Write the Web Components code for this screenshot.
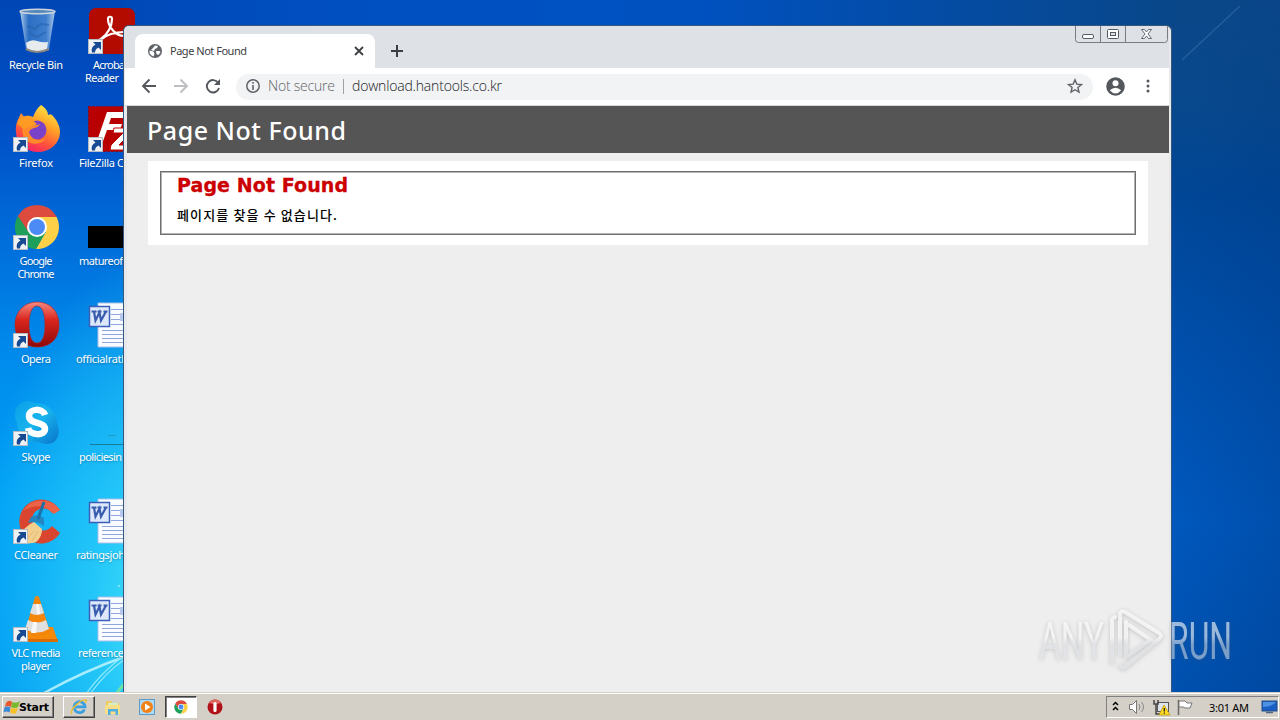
<!DOCTYPE html>
<html lang="en">
<head>
<meta charset="utf-8">
<title>Desktop</title>
<style>
  body {
    margin: 0;
    width: 1280px;
    height: 720px;
    overflow: hidden;
    font-family: "Noto Sans", "Open Sans", sans-serif;
    font-size: 11px;
  }
</style>
</head>
<body>
<x-desktop>
  <x-shortcut icon="bin" label="Recycle Bin" widths="54"></x-shortcut>
  <x-shortcut icon="acrobat" link label="Acroba|Reader" widths="32|34" starts="18|10"></x-shortcut>
  <x-shortcut icon="firefox" link label="Firefox" widths="34"></x-shortcut>
  <x-shortcut icon="filezilla" link label="FileZilla C" widths="45" starts="4"></x-shortcut>
  <x-shortcut icon="chrome" link label="Google|Chrome" widths="33|37"></x-shortcut>
  <x-shortcut icon="black" label="matureof" widths="44" starts="4"></x-shortcut>
  <x-shortcut icon="opera" link label="Opera" widths="30"></x-shortcut>
  <x-shortcut icon="word" label="officialratl" widths="48" starts="1"></x-shortcut>
  <x-shortcut icon="skype" link label="Skype" widths="29"></x-shortcut>
  <x-shortcut icon="line" label="policiesin" widths="43" starts="4"></x-shortcut>
  <x-shortcut icon="ccleaner" link label="CCleaner" widths="44"></x-shortcut>
  <x-shortcut icon="word" label="ratingsjoh" widths="49" starts="1"></x-shortcut>
  <x-shortcut icon="vlc" link label="VLC media|player" widths="49|30"></x-shortcut>
  <x-shortcut icon="word" label="reference" widths="46" starts="3"></x-shortcut>
  <x-browser slot="window" tab="Page Not Found" url="download.hantools.co.kr">
    <x-error-page heading="Page Not Found">페이지를 찾을 수 없습니다.</x-error-page>
  </x-browser>
  <x-watermark slot="window"></x-watermark>
</x-desktop>
<x-taskbar time="3:01 AM"></x-taskbar>

<script>
const CHROME = `
  <path d="M25 15 H44.6 L44.1 14 A22 22 0 0 0 5.9 14 L16 30Z" fill="#dd4b3e"/>
  <path d="M33.7 30 L24 47 A22 22 0 0 0 44.6 15 H25Z" fill="#fdd047"/>
  <path d="M16.3 30 L5.9 14 A22 22 0 0 0 24 47 L33.7 30Z" fill="#1fa05a"/>
  <circle cx="25" cy="25" r="10" fill="#fff"/><circle cx="25" cy="25" r="8" fill="#4c8bf5"/>`;

const ICONS = {
  bin: `
    <defs><linearGradient id="g"><stop offset="0" stop-color="#c4daf0" stop-opacity=".95"/><stop offset=".25" stop-color="#3d7ec8" stop-opacity=".7"/><stop offset=".75" stop-color="#5c97d8" stop-opacity=".7"/><stop offset="1" stop-color="#c5daf0" stop-opacity=".9"/></linearGradient></defs>
    <path d="M8 5 H43 L37 43 Q26 49 14 43 Z" fill="url(#g)"/>
    <path d="M14 37 Q19 33 25 35 T36 36 L35 43 Q25 48 15 43Z" fill="#e8ebee"/>
    <path d="M15 20l8 3 5-5 9 1M17 27l8 4 9-5" stroke="#2862ac" stroke-width="2" fill="none" opacity=".6"/>
    <ellipse cx="25.500" cy="5.500" rx="17.500" ry="2.200" fill="#5388bd" stroke="#ccd3da" stroke-width="1.500"/>
    <path d="M14 43 Q25 49 37 43" stroke="#8c8880" stroke-width="2" fill="none"/>`,
  acrobat: `
    <rect x="2" y="2" width="46" height="46" rx="7" fill="#b30b00"/>
    <path d="M14 33c7-5 11-13 11-20 0-3-4-3-4 0 0 8 8 17 16 17 4 0 4-4 0-4-8 0-16 2-22 7-3 3-5 1-1 0z" fill="none" stroke="#fff" stroke-width="2.200"/>`,
  firefox: `
    <defs><linearGradient id="g" x1=".8" y1="0" x2=".3" y2="1"><stop offset="0" stop-color="#fff04c"/><stop offset=".4" stop-color="#ffa126"/><stop offset=".7" stop-color="#ff553a"/><stop offset="1" stop-color="#f7206b"/></linearGradient></defs>
    <path d="M29 1c5 3 7 7 7 10 3-1 4 0 4 0 5 5 8 11 8 17a22 20 0 0 1-44 0c-1-8 2-12 5-19 1 1 2 3 3 4 2-2 6-1 9 0 2-5 4-9 8-12z" fill="url(#g)"/>
    <circle cx="25" cy="26" r="9.500" fill="#7a42c8"/>
    <path d="M15 22c4 1 8 0 13-2-2 5-9 3-11 8 2 8 10 10 17 6-4 8-20 8-23-3-1-3-1-7 0-10z" fill="#ff8a2a"/>
    <path d="M5 20c2-7 6-9 10-7 4 0 7 5 10 7-4 4-10 2-13 5z" fill="#ff9b25"/>`,
  filezilla: `
    <rect x="1.500" y="2.500" width="46" height="45" fill="#b90000" stroke="#900" stroke-dasharray="2 2"/>
    <path d="M17 8h24l-2 6H21l-2 6h13l-2 6H17l-5 14H6z" fill="#fff" transform="translate(3 0)"/>
    <path d="M27 24h18l-1 5-12 12h12l-2 5H23l1-5 12-12H26z" fill="#fff" stroke="#b90000"/>`,
  chrome: CHROME,
  black: `<rect x="1" y="24" width="46" height="22"/>`,
  opera: `
    <defs><linearGradient id="g" x2="0" y2="1"><stop offset="0" stop-color="#f58a80"/><stop offset=".4" stop-color="#d9251d"/><stop offset="1" stop-color="#8d0909"/></linearGradient></defs>
    <path fill-rule="evenodd" d="M25 2c13 0 22 9 22 23s-9 22-22 22S3 38 3 25 12 2 25 2zM25 6c-5 0-8 7-8 19s3 18 8 18 8-6 8-18S30 6 25 6z" fill="url(#g)" stroke="#bb201c" stroke-width=".6"/>`,
  skype: `
    <defs><linearGradient id="g" x2="1" y2="1"><stop offset="0" stop-color="#0aa0e8"/><stop offset=".5" stop-color="#18b4ee"/><stop offset="1" stop-color="#0873c9"/></linearGradient></defs>
    <path d="M15 3c4 0 7 2 10 2 10 0 20 9 20 20 4 9 1 21-10 21-4 0-7-2-10-2C13 44 5 36 5 25 0 13 5 4 15 3z" fill="url(#g)"/>
    <path d="M33 17c-2-7-16-7-16 1 0 9 16 5 16 13 0 7-15 7-17-1" fill="none" stroke="#fff" stroke-width="6.500"/>`,
  ccleaner: `
    <path d="M48 14A22 22 0 1 0 48 37l-8-7a11 11 0 1 1 0-13z" fill="#d9452f"/>
    <path d="M48 14A22 22 0 0 0 11 15q18-11 31 3z" fill="#ec6347"/>
    <path d="M3 43c7-9 14-15 19-17l8 7c0 6-3 11-6 13-8 3-15 1-21-3z" fill="#f3cf8d"/>
    <path d="M8 42l8-8M14 44l8-9M20 45l6-10" stroke="#e2b878"/>
    <path d="M19 21q6-4 13 1v8q-8-6-16-3z" fill="#2487c2"/>
    <path d="M26 23L32 6" stroke="#1d6fa8" stroke-width="3"/>`,
  vlc: `
    <path d="M14 33h27l5 15H8z" fill="#f58a0a"/><path d="M8 45h38v3H8z" fill="#dc6c05"/>
    <path d="M23 3q2-2 4 0l11 35q-13 8-25 0z" fill="#f5860c"/>
    <path d="M21 10h8l3 9q-7 4-14 0zM16 26q9 5 18 0l3 9q-12 7-24 0z" fill="#e0e0e0"/>
    <path d="M24 10h3l1 10h-3zM21 28h4l-1 11h-5z" fill="#f7f7f7"/>`,
  word: `
    <path d="M11 3h37v44H11z" fill="#f8fbff" stroke="#a9bfe8"/>
    <path d="M24 9.500h20M24 14.500h20M24 19.500h20M24 24.500h20M15 30.500h29M15 34.500h29M15 38.500h29M15 42.500h29" stroke="#91a6dc"/>
    <path d="M33 13h9v8h-9z" fill="#b8c9ee"/>
    <rect x="2.500" y="6.500" width="20" height="20" fill="#dde8fb" stroke="#3a60b9" stroke-width="1.500"/>
    <path d="M7 11.500l1.500 9 4-8 1.500 8 5-9M4.500 11.500h5M10.500 11.500h4M16.500 11.500h4" fill="none" stroke="#3a5cae" stroke-width="2.200"/>`,
  line: `<path d="M3 46.500h45" stroke="#167b99"/><path d="M21 37.500h8" stroke="#2797b8"/>`
};

const ARROW = `<rect x="1.500" y="33.500" width="14" height="14" fill="#eef2f5" stroke="#b5bcc4"/>
  <path d="M6 36h8v8l-2.500-2.500Q8 43 8 46.500H5Q3.500 41 8.500 38.500z" fill="#174a92"/>`;

// small bitmap-like icons of the taskbar
const SMALL = {
  flag: `<svg width="18" height="18" viewBox="0 0 18 18">
    <path d="M3 5q3-4 6-1l-1 5q-3-2-6 0z" fill="#e8562b"/><path d="M9.500 4q4 2 7.500-1l-2 6q-3 2-7 0z" fill="#79b92c"/>
    <path d="M1.500 9.500q3-2 6 0l-1 5q-3-2-6 0z" fill="#3b87d8"/><path d="M8 9.500q4 2 7 0l-2 6q-3 1-6-1z" fill="#f8c12c"/></svg>`,
  ie: `<svg width="18" height="18" viewBox="0 0 18 18">
    <path d="M14.500 11.500A5.500 5.500 0 1 1 15 8.800H5" fill="none" stroke="#3a9fe0" stroke-width="2.800"/>
    <path d="M2 16C-1 12 11 1 16 2c1 1 0 2-1 3" fill="none" stroke="#e9bd35" stroke-width="1.400"/></svg>`,
  folder: `<svg width="18" height="18" viewBox="0 0 18 18">
    <path d="M2 3h5l1 2h7v10H2z" fill="#efc95e"/><path d="M4 5h10v4H4z" fill="#d6efc0"/>
    <path d="M1 7h15v9H1z" fill="#f8df87"/><path d="M4 17v-6h10v6h-2.500v-3.500h-5V17z" fill="#51afe0"/></svg>`,
  player: `<svg width="18" height="18" viewBox="0 0 18 18">
    <rect x="1.500" y="1.500" width="15" height="15" fill="#b2d9f4" stroke="#5a9bcd"/>
    <circle cx="9" cy="9" r="6" fill="#f18215"/><path d="M7 5.500v7l5.500-3.500z" fill="#fff"/></svg>`,
  chrome: `<svg width="14" height="14" viewBox="2 2 46 46">${CHROME}</svg>`,
  opera: `<svg width="18" height="18" viewBox="0 0 18 18">
    <circle cx="9" cy="9" r="7.500" fill="#b01118"/><path d="M3 5a7 7 0 0 1 12 0q-6 2-12 0z" fill="#df6960"/>
    <rect x="7.400" y="4" width="3.200" height="10" rx="1.600" fill="#fff"/></svg>`
};

class XElement extends HTMLElement {
  constructor() {
    super();
    this.attachShadow({mode: 'open'});
  }

  connectedCallback() {
    this.shadowRoot.innerHTML = this.render();
  }

  attr(name) {
    return this.getAttribute(name) || '';
  }
}

// one line of text, tracked so that it takes the given width
class XFit extends XElement {
  render() {
    return `<style>
      :host { display: block; white-space: pre; width: max-content; }
      span { display: inline-block; }
    </style><span><slot></slot></span>`;
  }

  connectedCallback() {
    super.connectedCallback();
    const span = this.shadowRoot.querySelector('span');
    const space = (+this.attr('width') - span.getBoundingClientRect().width) / (this.textContent.length - 1);
    span.style.letterSpacing = space + 'px';
    span.style.marginRight = -space + 'px';
  }
}

class XDesktop extends XElement {
  render() {
    return `<style>
      :host {
        display: block; position: relative; height: 692px; overflow: hidden;
        background: radial-gradient(ellipse 190px 360px at 165px 610px, #4ae4f6 0, rgba(50, 215, 250, .75) 35%, transparent 100%),
          linear-gradient(#0046b5 0, #004fc6 18%, #006cda 34%, #008cec 52%, #00a0f6 72%, #009af2 100%);
      }
      .right { position: absolute; left: 1171px; top: 0; width: 109px; height: 692px;
        background: linear-gradient(100deg, transparent 20%, #00357f66), linear-gradient(#0a4789, #08488c 15%, #004696 28%, #0050ad 50%, #005cc4 75%, #0056b8); }
      .top { position: absolute; left: 123px; top: 0; width: 1049px; height: 27px; background: linear-gradient(90deg, #0049b9, #0050c2 25%, #0051c0 55%, #084789 100%); }
      .streaks { position: absolute; left: 0; top: 0; }
      .icons { position: relative; display: grid; grid-template-columns: 72px 72px; column-gap: 3px; grid-auto-rows: 98px; width: 147px; }
    </style>
    <div class="right"></div>
    <div class="top"></div>
    <svg class="streaks" width="1280" height="692">
      <path d="M44 693Q84 671 124 657" stroke="#bdf4ff" stroke-width="2.500" fill="none" opacity=".85"/>
      <path d="M86 694Q100 674 122 657M90 694Q106 672 124 660" stroke="#8eeaff" stroke-width="1.200" fill="none"/>
      <path d="M116 694l8-10" stroke="#6be3a8" stroke-width="3"/>
      <path d="M1240 6L1182 60" stroke="#3d75ae" stroke-width="1.500" fill="none" opacity=".5"/>
      <path d="M118 586h2" stroke="#c8f6ff"/>
    </svg>
    <div class="icons"><slot></slot></div>
    <slot name="window"></slot>`;
  }
}

class XShortcut extends XElement {
  render() {
    const widths = this.attr('widths').split('|');
    const starts = this.attr('starts').split('|');
    const lines = this.attr('label').split('|').map((text, i) =>
      `<x-fit width="${widths[i]}" style="${starts[i] ? 'align-self:flex-start;margin-left:' + starts[i] + 'px' : ''}">${text}</x-fit>`);
    return `<style>
      :host { display: flex; flex-direction: column; align-items: center; padding-top: 6px; color: #fff;
        font-size: 11px; line-height: 13px; text-shadow: 0 1px 2px #0356; }
      svg { margin-bottom: 4px; flex: none; overflow: visible; }
    </style>
    <svg width="48" height="48" viewBox="0 0 48 48">${ICONS[this.attr('icon')]}${this.hasAttribute('link') ? ARROW : ''}</svg>
    ${lines.join('')}`;
  }
}

class XBrowser extends XElement {
  render() {
    return `<style>
      :host { position: absolute; left: 123px; top: 25px; width: 1049px; height: 667px; box-sizing: border-box;
        display: flex; flex-direction: column; border: 1px solid #35587c; border-bottom: 0; border-radius: 6px 6px 0 0;
        background: #e6e8eb; padding: 0 2px 0 3px; color: #3c4043; }
      .strip { display: flex; height: 42px; background: #dee1e6; margin-left: -3px; padding-left: 2px; border-radius: 5px 5px 0 0; }
      .tab { display: flex; align-items: center; align-self: flex-end; width: 240px; height: 34px; margin-left: 9px;
        box-sizing: border-box; padding: 0 9px 0 12px; background: #fff; border-radius: 8px 8px 0 0; }
      .tab x-fit { margin: -2px auto 0 7px; }
      .tab, .plus, .buttons { flex: none; }
      .plus { align-self: center; margin: 8px auto 0 14px; }
      .bar { display: flex; align-items: center; height: 37px; background: #fff; margin-left: -2px; padding-left: 2px; border-bottom: 1px solid #d5d7da; }
      .nav { margin: -1px 0 0 14px; display: flex; gap: 16px; }
      .omni { display: flex; align-items: center; flex: none; width: 857px; height: 26px; box-sizing: border-box; margin-left: 15px;
        border-radius: 13px; background: #f1f3f4; padding: 0 10px; font: 300 14px "Open Sans", sans-serif; }
      .omni x-fit { margin: -2px 0 0 8px; color: #5f6368; }
      .omni i { width: 1px; height: 15px; background: #9aa0a6; margin-left: 8px; }
      .omni .url { color: #202124; margin: -2px auto 0 8px; }
      .omni svg { margin-top: -1px; }
      .profile { margin: -1px 0 0 13px; }
      .dots { margin: -1px 0 0 20px; }
      ::slotted(*) { flex: 1; }
    </style>
    <div class="strip">
      <div class="tab">
        <svg width="16" height="16" viewBox="0 0 16 16"><circle cx="8" cy="8" r="7" fill="#5f6368"/>
          <path d="M2.500 7.500l4 1 1 2.500-1 2.500Q2 12 2.500 7.500zM8 2.500l3 .5-1 2-2 1-1 2-3-1 2-2zM9 8l3.500 0 1 1-2 3-2-1z" fill="#fff"/></svg>
        <x-fit width="77">${this.attr('tab')}</x-fit>
        <svg width="14" height="14" viewBox="0 0 14 14"><path d="M3 3l8 8M11 3l-8 8" stroke="#3c4043" stroke-width="1.800"/></svg>
      </div>
      <svg class="plus" width="16" height="16" viewBox="0 0 16 16"><path d="M8 2v12M2 8h12" stroke="#3c4043" stroke-width="2"/></svg>
      <svg class="buttons" width="94" height="18" viewBox="0 0 94 18">
        <path d="M.5 0v13.500q0 3 3 3h86q3 0 3-3V0M25.500 0v16.500M50.500 0v16.500" fill="none" stroke="#777d87"/>
        <rect x="7.500" y="8.500" width="11" height="4" rx="1.500" fill="#fff" stroke="#555b66"/>
        <rect x="32.500" y="3.500" width="11" height="9" rx="1" fill="#fff" stroke="#555b66"/>
        <rect x="35.500" y="6.500" width="5" height="3" fill="#dee1e6" stroke="#555b66"/>
        <path d="M66.500 3.500h3l2 2.500 2-2.500h3l-3.500 4.500 3.500 4.500h-3l-2-2.500-2 2.500h-3l3.500-4.500z" fill="#fff" stroke="#555b66" stroke-width=".9"/>
      </svg>
    </div>
    <div class="bar">
      <div class="nav">
        <svg width="16" height="16" viewBox="0 0 16 16"><path d="M15 8H2M8.500 1.500L2 8l6.500 6.500" fill="none" stroke="#54585d" stroke-width="1.900"/></svg>
        <svg width="16" height="16" viewBox="0 0 16 16"><path d="M1 8h13M7.500 1.500L14 8l-6.500 6.500" fill="none" stroke="#bcbec1" stroke-width="1.900"/></svg>
        <svg width="16" height="16" viewBox="0 0 16 16"><path d="M13.200 4.800A6.200 6.200 0 1 0 14 10" fill="none" stroke="#54585d" stroke-width="1.900"/><path d="M15 1v6H9z" fill="#54585d"/></svg>
      </div>
      <div class="omni">
        <svg width="14" height="14" viewBox="0 0 14 14"><circle cx="7" cy="7" r="6.200" fill="none" stroke="#5f6368" stroke-width="1.500"/><path d="M7 6v5M7 3v1.700" stroke="#5f6368" stroke-width="1.600"/></svg>
        <x-fit width="67">Not secure</x-fit><i></i>
        <x-fit class="url" width="150">${this.attr('url')}</x-fit>
        <svg width="16" height="16" viewBox="0 0 16 16"><path d="M8 1.800l1.800 4.300 4.700.4-3.600 3 1.100 4.600L8 11.700 4 14.100l1.100-4.600-3.600-3 4.700-.4z" fill="none" stroke="#5f6368" stroke-width="1.400"/></svg>
      </div>
      <svg class="profile" width="19" height="19" viewBox="0 0 19 19"><circle cx="9.500" cy="9.500" r="9.300" fill="#54585d"/><circle cx="9.500" cy="6.200" r="3" fill="#fff"/><path d="M3.800 13.200q5.700-5 11.400 0-5.700 6.600-11.400 0z" fill="#fff"/></svg>
      <svg class="dots" width="6" height="16" viewBox="0 0 6 16" fill="#54585d"><circle cx="3" cy="3" r="1.500"/><circle cx="3" cy="8" r="1.500"/><circle cx="3" cy="13" r="1.500"/></svg>
    </div>
    <slot></slot>`;
  }
}

class XErrorPage extends XElement {
  render() {
    const heading = this.attr('heading');
    return `<style>
      :host { display: block; background: #eee; color: #000; }
      header { height: 47px; background: #555; padding-left: 20px; display: flex; align-items: center; color: #fff;
        font: 500 25px/50px "Noto Sans", sans-serif; }
      header x-fit { margin-top: 1px; }
      main { margin: 8px 21px; height: 84px; width: 1000px; background: #fff; box-sizing: border-box; padding: 10px 12px; }
      section { height: 64px; width: 976px; box-sizing: border-box; border: 1px solid #6f6f6f;
        box-shadow: inset 0 0 0 1px #b4b4b4; padding: 1px 0 0 16px; }
      h2 { margin: 0; color: #c00; font: bold 19px/25px "DejaVu Sans", sans-serif; -webkit-text-stroke: .3px #c00; }
      p { margin: 8px 0 0; font: 500 13px/18px "Noto Sans CJK KR", sans-serif; }
    </style>
    <header><x-fit width="199">${heading}</x-fit></header>
    <main><section>
      <h2><x-fit width="171">${heading}</x-fit></h2>
      <p><x-fit width="160">${this.textContent}</x-fit></p>
    </section></main>`;
  }
}

class XWatermark extends XElement {
  render() {
    return `<style>
      :host { position: absolute; left: 1030px; top: 600px; }
      svg { display: block; filter: drop-shadow(0 1px 2px rgba(90, 90, 90, .5)); }
      text { font: 400 52px Roboto, sans-serif; }
    </style>
    <svg width="240" height="84" viewBox="0 0 240 84" opacity=".75">
      <defs><linearGradient id="fade" gradientUnits="userSpaceOnUse" x1="0" y1="20" x2="0" y2="62">
        <stop offset=".4" stop-color="#fff" stop-opacity=".8"/><stop offset=".6" stop-color="#e2e5ea" stop-opacity=".7"/></linearGradient></defs>
      <text x="9" y="59" textLength="65" lengthAdjust="spacingAndGlyphs" fill="url(#fade)">ANY</text>
      <text x="139" y="59" textLength="63" lengthAdjust="spacingAndGlyphs" fill="url(#fade)">RUN</text>
      <path d="M82 62V21q0-3 3-4M90 54V14q1-4 5-2l34 21q4 3 0 6L95 67q-4 2-5-2M96 22l0 35 25-17-22-15" fill="none" stroke="url(#fade)" stroke-width="4" stroke-linecap="round"/>
    </svg>`;
  }
}

class XTaskbar extends XElement {
  render() {
    return `<style>
      :host { display: flex; height: 28px; box-sizing: border-box; align-items: center; padding: 3px 1px 1px 2px;
        background: linear-gradient(#d4d0c8 0 1px, #fff 1px 2px, #d4d0c8 2px); color: #000; }
      div { display: flex; align-items: center; box-sizing: border-box; }
      .start, .raised { border: 1px solid; border-color: #fff #404040 #404040 #fff; box-shadow: inset -1px -1px #808080; height: 22px; }
      .start { width: 52px; font: bold 11px "DejaVu Sans", sans-serif; }
      .start x-fit { margin-left: -2px; }
      .item { width: 32px; height: 22px; justify-content: center; }
      .apps { margin-left: 9px; gap: 2px; }
      .pressed { border: 1px solid; border-color: #404040 #fff #fff #404040; box-shadow: inset 1px 1px #808080; background: #fff; }
      .tray { margin-left: auto; width: 173px; height: 22px; border: 1px solid; border-color: #808080 #fff #fff #808080; padding-left: 4px; }
      .tray x-fit { margin: 0 auto 0 16px; }
    </style>
    <div class="start">${SMALL.flag}<x-fit width="30">Start</x-fit></div>
    <div class="apps">
      <div class="item raised">${SMALL.ie}</div>
      <div class="item">${SMALL.folder}</div>
      <div class="item">${SMALL.player}</div>
      <div class="item pressed">${SMALL.chrome}</div>
      <div class="item">${SMALL.opera}</div>
    </div>
    <div class="tray">
      <svg width="82" height="18" viewBox="0 0 82 18">
        <path d="M2 7l2.500-2.500L7 7M2 12l2.500-2.500L7 12" fill="none" stroke="#000" stroke-width="1.500"/>
        <path d="M18.500 6.500h3l4-4v13l-4-4h-3z" fill="#fff" stroke="#777"/><path d="M28 6q2 3 0 6M30.500 4q4 5 0 10" fill="none" stroke="#888"/>
        <rect x="46.500" y="4.500" width="11" height="9" fill="#dbe4ee" stroke="#555"/><path d="M43 2v4h4V2M45 6v10h4" fill="none" stroke="#444" stroke-width="1.500"/>
        <path d="M53 7l6 10H48z" fill="#ffda1f" stroke="#ba9000" stroke-width=".7"/><path d="M53.300 10v3.500M53.300 14.500v1.200" stroke="#222" stroke-width="1.300"/>
        <path d="M67.500 2v15" stroke="#666" stroke-width="1.500"/><path d="M68 3h6l2 2h5l-2 5h-5l-2-1h-4z" fill="#fff" stroke="#777"/>
      </svg>
      <x-fit width="40">${this.attr('time')}</x-fit>
      <svg width="17" height="16" viewBox="0 0 17 16"><rect x="1" y="2" width="15" height="10" fill="#1a5fc4" stroke="#234d86"/><path d="M2 3h13q-4 5-13 5z" fill="#4d91e2"/><path d="M5 13.500h7" stroke="#506680" stroke-width="1.500"/></svg>
    </div>`;
  }
}

customElements.define('x-fit', XFit);
customElements.define('x-desktop', XDesktop);
customElements.define('x-shortcut', XShortcut);
customElements.define('x-browser', XBrowser);
customElements.define('x-error-page', XErrorPage);
customElements.define('x-watermark', XWatermark);
customElements.define('x-taskbar', XTaskbar);
</script>
</body>
</html>
